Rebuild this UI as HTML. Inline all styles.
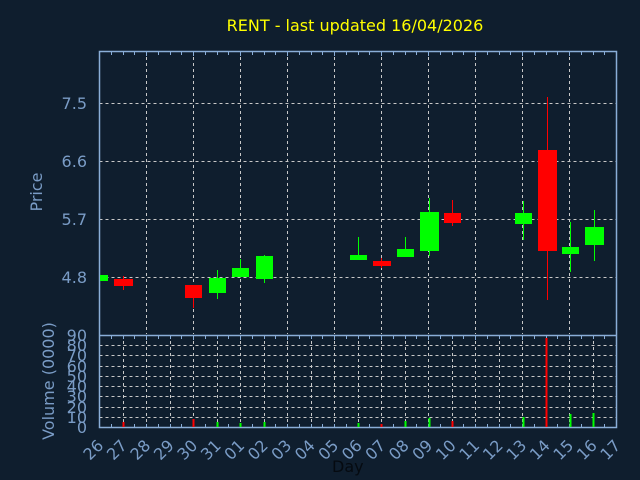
<!DOCTYPE html>
<html><head><meta charset="utf-8"><style>
html,body{margin:0;padding:0;background:#0f1e2e;width:640px;height:480px;overflow:hidden}
</style></head><body>
<svg width="640" height="480" xmlns="http://www.w3.org/2000/svg" font-family="DejaVu Sans, Liberation Sans, sans-serif">
<rect width="640" height="480" fill="#0f1e2e"/>
<text x="355" y="31" fill="#ffff00" font-size="16" text-anchor="middle">RENT - last updated 16/04/2026</text>
<g stroke="#c8c8c8" stroke-width="1" stroke-dasharray="3,3" fill="none">
<path d="M99.5 103.5H617M99.5 161.5H617M99.5 219.5H617M99.5 277.5H617"/>
<path d="M146.5 51V334M193.5 51V334M240.5 51V334M287.5 51V334M334.5 51V334M381.5 51V334M428.5 51V334M475.5 51V334M522.5 51V334M569.5 51V334"/>
<path d="M99.5 345.5H617M99.5 355.5H617M99.5 366.5H617M99.5 376.5H617M99.5 386.5H617M99.5 396.5H617M99.5 407.5H617M99.5 417.5H617"/>
<path d="M123.5 335V427M146.5 335V427M170.5 335V427M193.5 335V427M217.5 335V427M240.5 335V427M264.5 335V427M287.5 335V427M311.5 335V427M334.5 335V427M358.5 335V427M381.5 335V427M405.5 335V427M428.5 335V427M452.5 335V427M475.5 335V427M499.5 335V427M522.5 335V427M546.5 335V427M569.5 335V427M593.5 335V427"/>
</g>
<g stroke="#8aaed8" stroke-width="1.5" fill="none">
<rect x="99.5" y="51.5" width="517" height="376"/>
<path d="M99.5 335.5H617"/>
<path id="tk" d="M111.5 52v3M123.5 52v3M134.5 52v3M146.5 52v4M158.5 52v3M170.5 52v3M181.5 52v3M193.5 52v4M205.5 52v3M217.5 52v3M228.5 52v3M240.5 52v4M252.5 52v3M264.5 52v3M275.5 52v3M287.5 52v4M299.5 52v3M311.5 52v3M322.5 52v3M334.5 52v4M346.5 52v3M358.5 52v3M369.5 52v3M381.5 52v4M393.5 52v3M405.5 52v3M416.5 52v3M428.5 52v4M440.5 52v3M452.5 52v3M463.5 52v3M475.5 52v4M487.5 52v3M499.5 52v3M510.5 52v3M522.5 52v4M534.5 52v3M546.5 52v3M557.5 52v3M569.5 52v4M581.5 52v3M593.5 52v3M604.5 52v3" stroke-width="1"/>
<use href="#tk" y="284"/>
<use href="#tk" y="372" transform="translate(0,0)"/>
</g>
<g fill="#ff0000" stroke="#ff0000">
<path d="M123.5 276V290M193.5 285V308M381.5 258V268M452.5 200V226M547.5 97V300" stroke-width="1"/>
<rect x="114" y="279" width="19" height="7" stroke="none"/>
<rect x="185" y="285" width="17" height="13" stroke="none"/>
<rect x="373" y="261" width="18" height="5" stroke="none"/>
<rect x="444" y="213" width="17" height="10" stroke="none"/>
<rect x="538" y="150" width="19" height="101" stroke="none"/>
</g>
<g fill="#00ff00" stroke="#00ff00">
<path d="M217.5 270V299M240.5 259V277M264.5 255V283M358.5 237V259M405.5 237V256M429.5 198V256M523.5 201V240M570.5 222V272M594.5 210V261" stroke-width="1"/>
<rect x="100" y="275" width="8" height="6" stroke="none"/>
<rect x="209" y="278" width="17" height="15" stroke="none"/>
<rect x="232" y="268" width="17" height="9" stroke="none"/>
<rect x="256" y="256" width="17" height="23" stroke="none"/>
<rect x="350" y="255" width="17" height="5" stroke="none"/>
<rect x="397" y="249" width="17" height="8" stroke="none"/>
<rect x="420" y="212" width="19" height="39" stroke="none"/>
<rect x="515" y="213" width="17" height="11" stroke="none"/>
<rect x="562" y="247" width="17" height="7" stroke="none"/>
<rect x="585" y="227" width="19" height="18" stroke="none"/>
</g>
<g stroke-width="2">
<path d="M123.5 427V422M193.5 427V419M381.5 427V424M452.5 427V421M546.5 427V338" stroke="#ff0000"/>
<path d="M217.5 427V422M240.5 427V423M264.5 427V422M358.5 427V423M405.5 427V421M429.5 427V418M523.5 427V417M570.5 427V414M593.5 427V413" stroke="#00ff00"/>
</g>
<g fill="#7a9cc6" font-size="16" text-anchor="end">
<text x="87" y="109">7.5</text><text x="87" y="167">6.6</text><text x="87" y="225">5.7</text><text x="87" y="283">4.8</text>
</g>
<g fill="#7a9cc6" font-size="16" text-anchor="end">
<text x="87" y="341">90</text><text x="87" y="351">80</text><text x="87" y="361">70</text><text x="87" y="372">60</text><text x="87" y="382">50</text><text x="87" y="392">40</text><text x="87" y="402">30</text><text x="87" y="413">20</text><text x="87" y="423">10</text><text x="87" y="433">0</text>
</g>
<text transform="translate(42,192) rotate(-90)" fill="#7a9cc6" font-size="16" text-anchor="middle">Price</text>
<text transform="translate(54,381) rotate(-90)" fill="#7a9cc6" font-size="16" text-anchor="middle">Volume (0000)</text>
<g fill="#7a9cc6" font-size="16">
<text transform="translate(90,461) rotate(-45)">26</text>
<text transform="translate(113.5,461) rotate(-45)">27</text>
<text transform="translate(137,461) rotate(-45)">28</text>
<text transform="translate(160.5,461) rotate(-45)">29</text>
<text transform="translate(184,461) rotate(-45)">30</text>
<text transform="translate(207.5,461) rotate(-45)">31</text>
<text transform="translate(231,461) rotate(-45)">01</text>
<text transform="translate(254.5,461) rotate(-45)">02</text>
<text transform="translate(278,461) rotate(-45)">03</text>
<text transform="translate(301.5,461) rotate(-45)">04</text>
<text transform="translate(325,461) rotate(-45)">05</text>
<text transform="translate(348.5,461) rotate(-45)">06</text>
<text transform="translate(372,461) rotate(-45)">07</text>
<text transform="translate(395.5,461) rotate(-45)">08</text>
<text transform="translate(419,461) rotate(-45)">09</text>
<text transform="translate(442.5,461) rotate(-45)">10</text>
<text transform="translate(466,461) rotate(-45)">11</text>
<text transform="translate(489.5,461) rotate(-45)">12</text>
<text transform="translate(513,461) rotate(-45)">13</text>
<text transform="translate(536.5,461) rotate(-45)">14</text>
<text transform="translate(560,461) rotate(-45)">15</text>
<text transform="translate(583.5,461) rotate(-45)">16</text>
<text transform="translate(607,461) rotate(-45)">17</text>
</g>
<text x="332" y="472" fill="#050a10" font-size="16">Day</text>
</svg>
</body></html>
